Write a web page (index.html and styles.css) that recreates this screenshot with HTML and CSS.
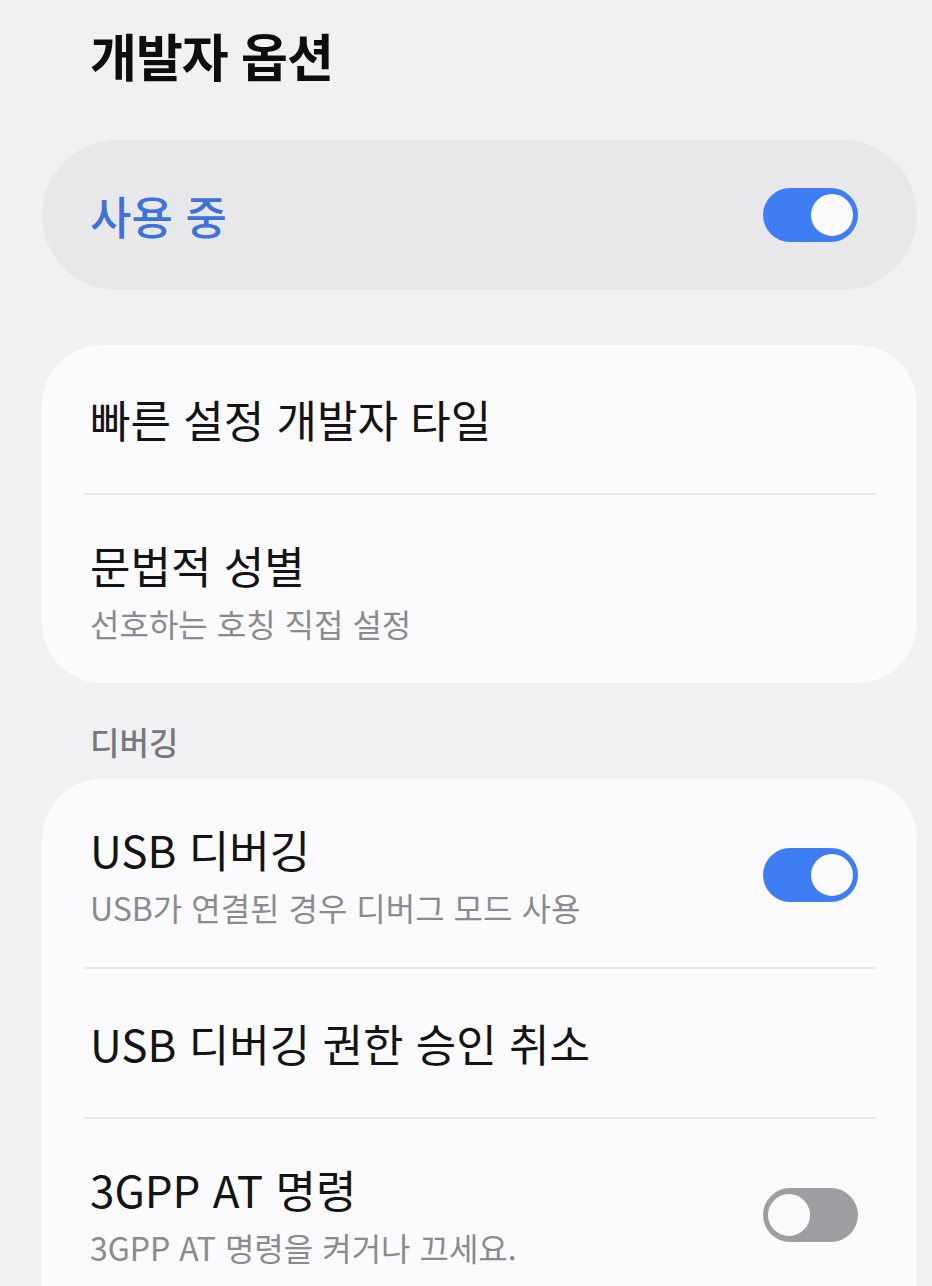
FILE: index.html
```html
<!DOCTYPE html>
<html lang="ko">
<head>
  <meta charset="UTF-8" />
  <meta name="viewport" content="width=device-width, initial-scale=1.0"/>
  <title>개발자 옵션</title>
  <link rel="stylesheet" href="styles.css">
</head>
<body>
  <div class="pagina">
    <h1 class="titulo">개발자 옵션</h1>

    <div class="principal">
      <span class="principal-texto">사용 중</span>
      <span class="interruptor encendido"><span class="perilla"></span></span>
    </div>

    <div class="tarjeta">
      <div class="fila">
        <div class="fila-texto">
          <div class="fila-titulo">빠른 설정 개발자 타일</div>
        </div>
      </div>
      <div class="fila doble">
        <div class="fila-texto">
          <div class="fila-titulo">문법적 성별</div>
          <div class="fila-sub">선호하는 호칭 직접 설정</div>
        </div>
      </div>
    </div>

    <div class="seccion">디버깅</div>

    <div class="tarjeta larga">
      <div class="fila doble">
        <div class="fila-texto">
          <div class="fila-titulo">USB 디버깅</div>
          <div class="fila-sub">USB가 연결된 경우 디버그 모드 사용</div>
        </div>
        <span class="interruptor encendido"><span class="perilla"></span></span>
      </div>
      <div class="fila">
        <div class="fila-texto">
          <div class="fila-titulo">USB 디버깅 권한 승인 취소</div>
        </div>
      </div>
      <div class="fila doble">
        <div class="fila-texto">
          <div class="fila-titulo">3GPP AT 명령</div>
          <div class="fila-sub">3GPP AT 명령을 켜거나 끄세요.</div>
        </div>
        <span class="interruptor"><span class="perilla"></span></span>
      </div>
    </div>
  </div>
</body>
</html>
```

FILE: styles.css
```css
html, body {
  margin: 0;
  height: 100%;
  overflow: hidden;
}

body {
  font-family: "Noto Sans CJK KR", "Noto Sans", sans-serif;
  background-color: #f1f1f3;
  color: #141414;
}

.pagina {
  padding: 0 15px 0 42px;
}

.titulo {
  margin: 25px 0 55px 48px;
  font-size: 51px;
  line-height: 60px;
  font-weight: 700;
  letter-spacing: -1px;
  color: #0d0d0d;
}

.principal {
  display: flex;
  align-items: center;
  justify-content: space-between;
  height: 150px;
  padding: 0 59px 0 48px;
  background-color: #e8e8ea;
  border-radius: 75px;
}

.principal-texto {
  font-size: 45px;
  font-weight: 500;
  color: #3f72d8;
}

.tarjeta {
  margin-top: 55px;
  background-color: #fbfbfd;
  border-radius: 60px;
  padding: 0 41px 0 42px;
}

.tarjeta.larga {
  padding-bottom: 80px;
}

.fila {
  display: flex;
  align-items: center;
  justify-content: space-between;
  padding: 48px 18px 48px 6px;
  border-top: 2px solid #e7e7ea;
}

.fila:first-child {
  border-top: none;
}

.fila.doble {
  padding: 44px 18px 40px 6px;
}

.fila-titulo {
  font-size: 44px;
  line-height: 52px;
}

.fila-sub {
  margin-top: 12px;
  font-size: 32px;
  line-height: 40px;
  color: #8b8b8f;
}

.seccion {
  margin: 38px 0 18px 48px;
  font-size: 32px;
  line-height: 40px;
  font-weight: 500;
  color: #78787c;
}

.seccion + .tarjeta {
  margin-top: 0;
}

.interruptor {
  display: flex;
  align-items: center;
  justify-content: flex-start;
  box-sizing: border-box;
  width: 95px;
  height: 54px;
  padding: 0 2px;
  border-radius: 27px;
  background-color: #9d9da2;
  flex-shrink: 0;
}

.interruptor.encendido {
  justify-content: flex-end;
  background-color: #3f7df5;
}

.perilla {
  box-sizing: border-box;
  width: 48px;
  height: 48px;
  border-radius: 50%;
  background-color: #fbfbfd;
  border: 3px solid #9d9da2;
}

.encendido .perilla {
  border-color: #3f7df5;
}
```
